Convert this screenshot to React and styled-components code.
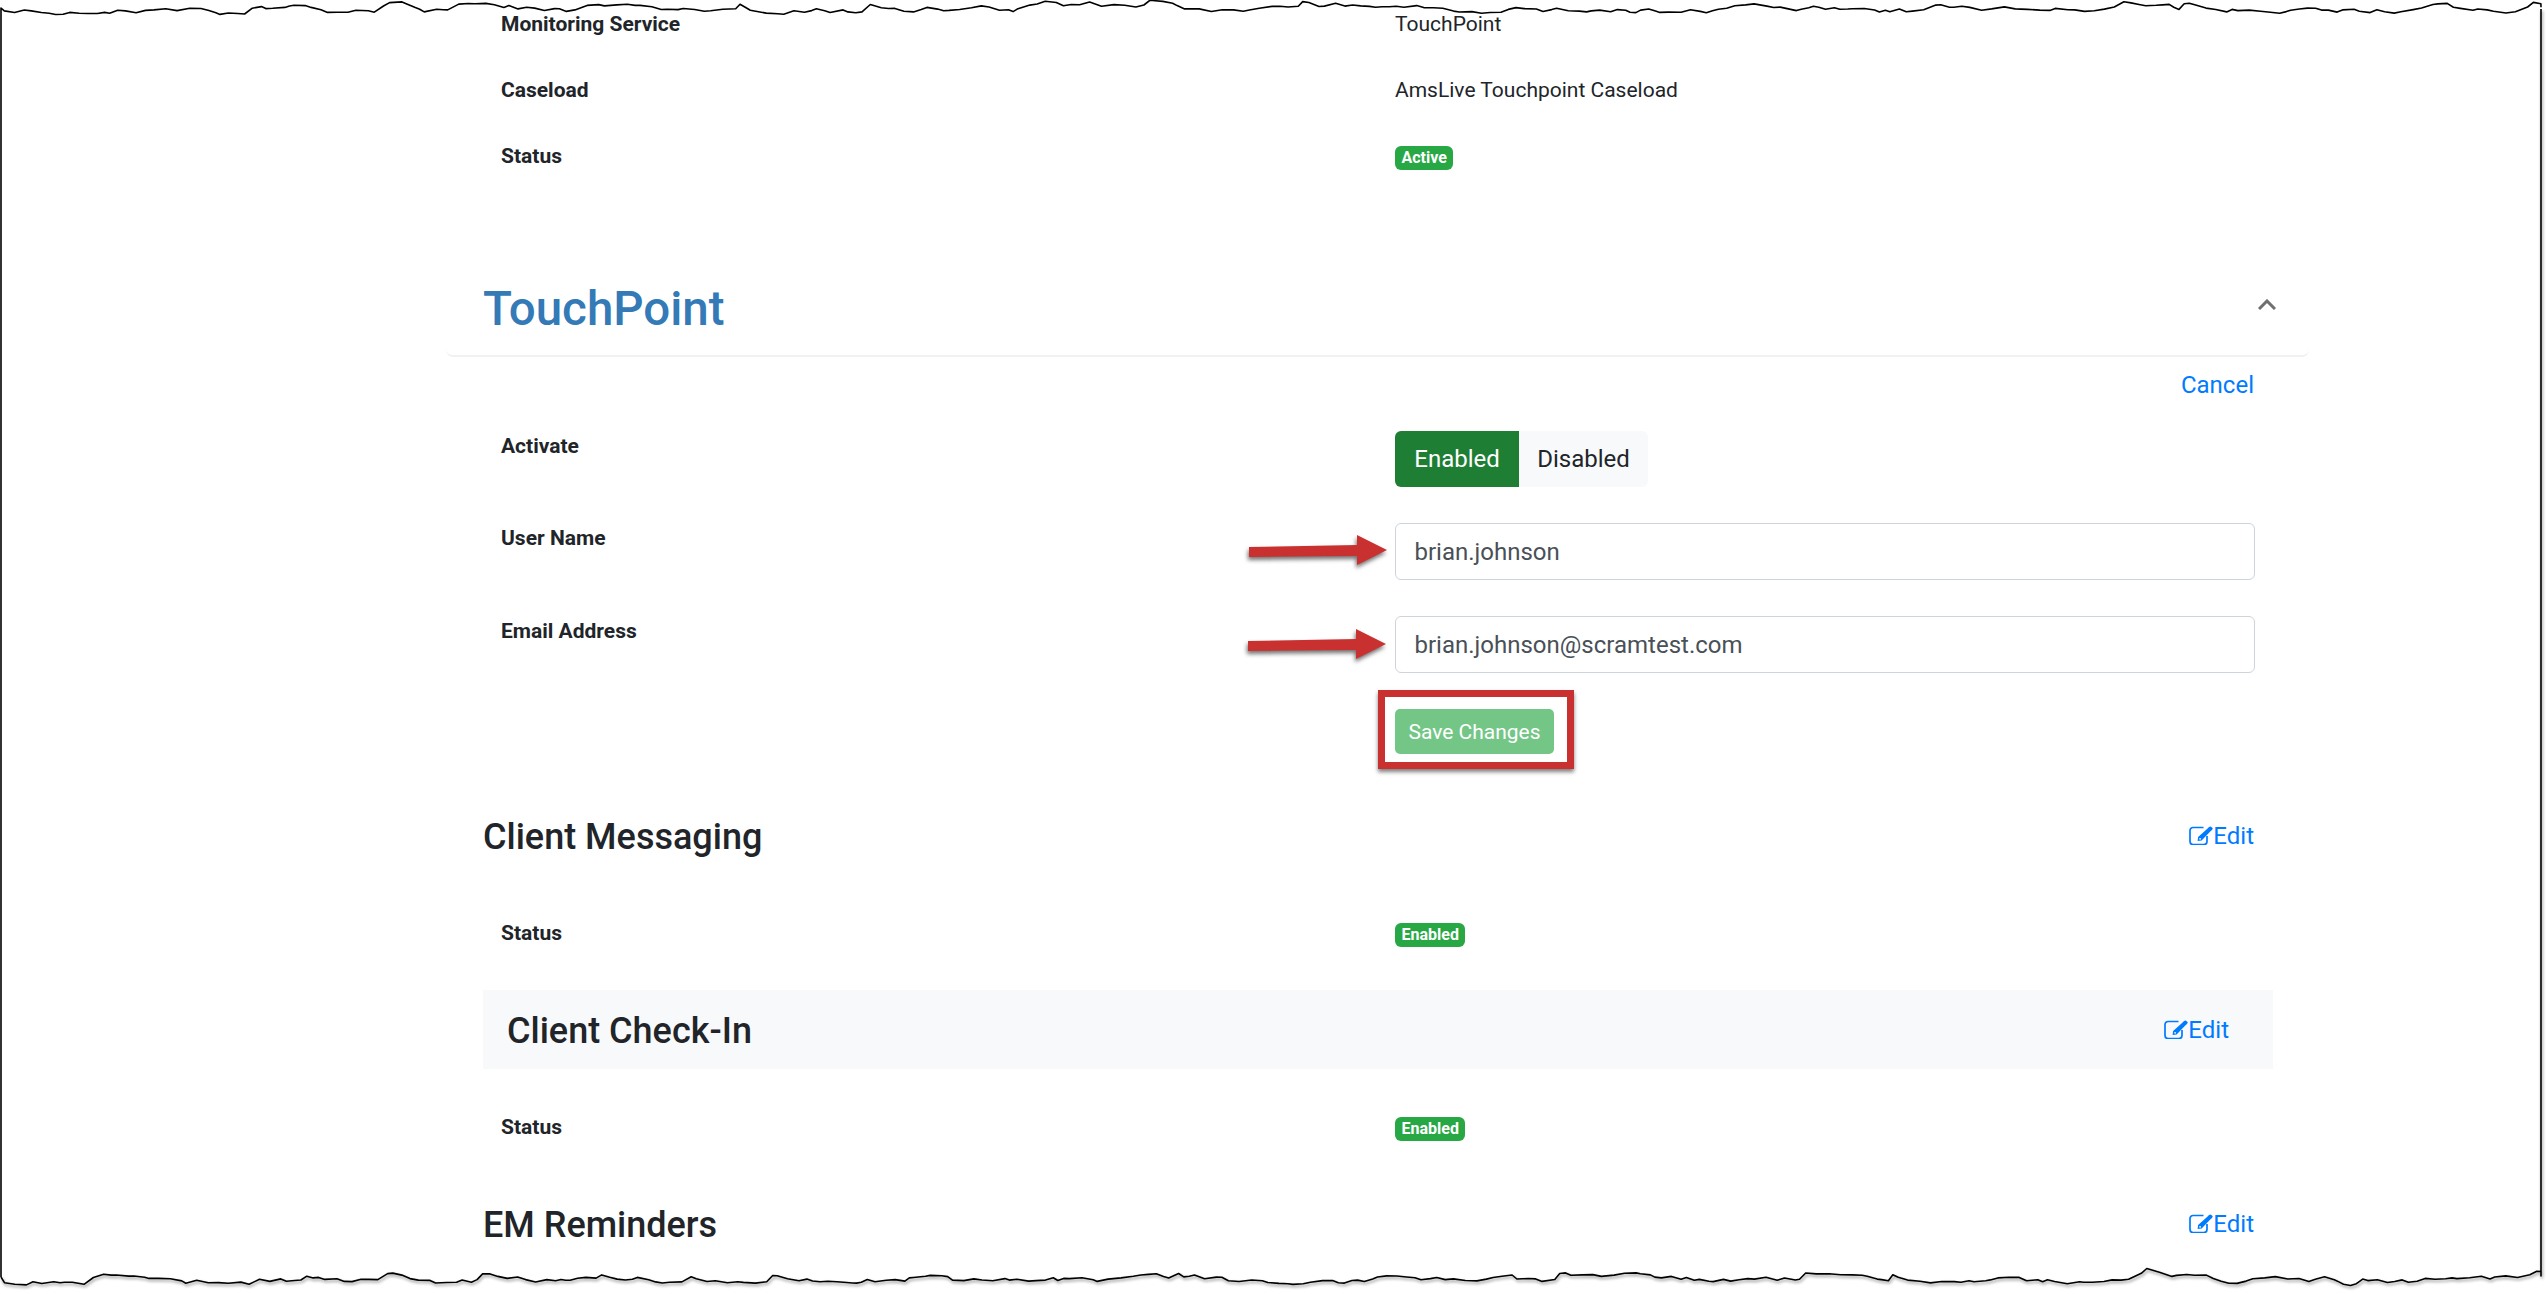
import React from 'react'
import styled, { createGlobalStyle } from 'styled-components'

const GlobalStyle = createGlobalStyle`
  html, body {
    margin: 0;
    padding: 0;
    background: #fff;
  }
  body {
    font-family: 'Roboto', 'Liberation Sans', sans-serif;
    color: #212529;
  }
`

const Sheet = styled.div`
  position: relative;
  width: 2547px;
  height: 1294px;
  overflow: hidden;
  background: #fff;
  padding: 9px 238px 0 450px;
  box-sizing: border-box;
`

const Content = styled.div`
  display: flex;
  flex-direction: column;
  width: 1859px;
`

const Inner = styled.div`
  padding: 0 36px 0 33px;
`

const Row = styled.div`
  display: grid;
  grid-template-columns: 912px 1fr;
  height: ${(p) => p.$height || 66}px;
`

const Label = styled.div`
  padding-left: 18px;
  padding-top: ${(p) => p.$top || 0}px;
  font-size: 21px;
  line-height: 31.5px;
  font-weight: 700;
`

const Value = styled.div`
  font-size: 21px;
  line-height: 31.5px;
  color: #212529;
`

const Badge = styled.span`
  display: inline-flex;
  align-items: center;
  justify-content: center;
  vertical-align: top;
  height: 24px;
  padding: 0 6.5px;
  margin-top: ${(p) => p.$top || 0}px;
  border-radius: 6px;
  background: #28a745;
  color: #fff;
  font-size: 16px;
  line-height: 24px;
  font-weight: 700;
`

const ServiceHeader = styled.div`
  display: flex;
  align-items: flex-end;
  justify-content: space-between;
  height: 150px;
  margin: -2px 0 0 -4px;
  padding: 0 33px 0 37px;
  border-bottom: 2px solid #f0f1f2;
  border-radius: 0 0 7px 7px;
`

const ServiceTitle = styled.h1`
  margin: 0 0 17px;
  font-size: 47.5px;
  line-height: 57px;
  font-weight: 500;
  color: #337ab7;
`

const ChevronMark = styled.svg`
  width: 18px;
  height: 11px;
  margin-bottom: 45px;
  fill: none;
  stroke: #707070;
  stroke-width: 3;
`

const ActionBar = styled.div`
  display: flex;
  justify-content: flex-end;
  height: 74px;
  padding-top: 10px;
  padding-right: 19px;
  box-sizing: border-box;
`

const TextLink = styled.a`
  display: inline-flex;
  align-items: center;
  height: 36px;
  font-size: 24px;
  color: #007bff;
  text-decoration: none;
`

const Toggle = styled.div`
  display: inline-flex;
  height: 56px;
  border-radius: 6px;
  overflow: hidden;
`

const ToggleOption = styled.div`
  display: flex;
  align-items: center;
  justify-content: center;
  width: ${(p) => p.$width}px;
  font-size: 24px;
  background: ${(p) => (p.$active ? '#1e7e34' : '#f8f9fa')};
  color: ${(p) => (p.$active ? '#fff' : '#212529')};
`

const FieldCell = styled.div`
  position: relative;
  padding-right: 18px;
`

const Input = styled.input`
  display: block;
  width: 100%;
  height: 57px;
  box-sizing: border-box;
  padding: 0 18.5px;
  border: 1.5px solid #ced4da;
  border-radius: 6px;
  background: #fff;
  font-family: inherit;
  font-size: 24px;
  color: #495057;
`

const ArrowMark = styled.svg`
  position: absolute;
  top: ${(p) => p.$top}px;
  left: ${(p) => p.$left}px;
  width: 150px;
  height: 44px;
  overflow: visible;
  filter: drop-shadow(-1px 3px 2px rgba(0, 0, 0, 0.55));
`

const SaveWrap = styled.div`
  position: relative;
  display: inline-block;
`

const SaveButton = styled.button`
  display: block;
  width: 159px;
  height: 45px;
  padding: 0;
  border: 0;
  border-radius: 5px;
  background: #74c687;
  color: #fff;
  font-family: inherit;
  font-size: 21px;
`

const Highlight = styled.div`
  position: absolute;
  top: -19px;
  left: -17px;
  right: -20px;
  bottom: -15px;
  border: 7px solid #c93131;
  box-shadow: 0 3px 4px rgba(0, 0, 0, 0.5);
`

const SectionHeader = styled.div`
  display: flex;
  align-items: center;
  justify-content: space-between;
  height: 79px;
  padding: 0 ${(p) => (p.$shaded ? 44 : 19)}px 0 ${(p) => (p.$shaded ? 24 : 0)}px;
  background: ${(p) => (p.$shaded ? '#f8f9fa' : 'transparent')};
`

const SectionTitle = styled.h2`
  margin: 0;
  padding-top: 4px;
  font-size: 36px;
  line-height: 43px;
  font-weight: 500;
  color: #212529;
`

const EditGlyph = styled.svg`
  width: 24px;
  height: 19px;
  flex: none;
  fill: currentColor;
`

const Frame = styled.svg`
  position: absolute;
  top: 0;
  left: 0;
  width: 2547px;
  height: 1294px;
  pointer-events: none;
`

const FrameLine = styled.path`
  fill: none;
  stroke: #000;
  stroke-width: 1.6;
  stroke-linejoin: round;
  filter: ${(p) => (p.$shadow ? 'drop-shadow(1.5px 2px 1.5px rgba(0,0,0,0.45))' : 'none')};
`

// torn paper edge, seeded so it comes out the same each run
function tornEdge(seed, base, spread) {
  let s = seed
  const rnd = () => {
    s = (s * 16807) % 2147483647
    return s / 2147483647
  }
  const pts = []
  let x = 0
  let y = base
  while (x < 2541) {
    x += 4 + rnd() * 9
    const pull = (base - y) * 0.25
    y += pull + (rnd() - 0.5) * spread
    if (rnd() < 0.08) y -= spread * 0.9
    pts.push(`${Math.min(x, 2541).toFixed(1)} ${y.toFixed(1)}`)
  }
  return pts
}

const topEdge = tornEdge(4711, 10, 5)
const bottomEdge = tornEdge(9137, 1281, 5)
const topPath = `M1 1277 L1 8 L${topEdge.join(' L')}`
const bottomPath = `M2541 9 L2541 1276 L${[...bottomEdge].reverse().join(' L')} L1 1277`

function Arrow({ top, left }) {
  return (
    <ArrowMark $top={top} $left={left} viewBox="0 0 150 44">
      <polygon points="0,12 108,10 108,0 138,15 108,30 108,21 0,22" fill="#c93131" />
    </ArrowMark>
  )
}

function EditIcon() {
  return (
    <EditGlyph viewBox="0 0 24 19">
      <path d="M14.5 1.5H4A3 3 0 0 0 1 4.5V15.5A3 3 0 0 0 4 18.5H15A3 3 0 0 0 18 15.5V10" fill="none" stroke="currentColor" strokeWidth="1.7" />
      <path
        fillRule="evenodd"
        d="M8.6 15L9.1 11L18.6 2.4L20 1L21.8 0.4L23.8 2.2L23 4L21.5 5.2L12.6 14.4ZM10.2 12.8a0.9 0.9 0 1 0 1.8 0a0.9 0.9 0 1 0-1.8 0Z"
      />
    </EditGlyph>
  )
}

function EditLink() {
  return (
    <TextLink href="#">
      <EditIcon />
      Edit
    </TextLink>
  )
}

export default function App() {
  return (
    <>
      <GlobalStyle />
      <Sheet>
        <Content>
          <Inner>
            <Row>
              <Label>Monitoring Service</Label>
              <Value>TouchPoint</Value>
            </Row>
            <Row>
              <Label>Caseload</Label>
              <Value>AmsLive Touchpoint Caseload</Value>
            </Row>
            <Row>
              <Label>Status</Label>
              <Value>
                <Badge $top={5}>Active</Badge>
              </Value>
            </Row>
          </Inner>
          <ServiceHeader>
            <ServiceTitle>TouchPoint</ServiceTitle>
            <ChevronMark viewBox="0 0 18 11">
              <polyline points="1,10 9,2 17,10" />
            </ChevronMark>
          </ServiceHeader>
          <Inner>
            <ActionBar>
              <TextLink href="#">Cancel</TextLink>
            </ActionBar>
            <Row $height={92}>
              <Label>Activate</Label>
              <div>
                <Toggle>
                  <ToggleOption $active $width={124}>Enabled</ToggleOption>
                  <ToggleOption $width={129}>Disabled</ToggleOption>
                </Toggle>
              </div>
            </Row>
            <Row $height={93}>
              <Label>User Name</Label>
              <FieldCell>
                <Arrow top={12} left={-146} />
                <Input readOnly value="brian.johnson" />
              </FieldCell>
            </Row>
            <Row $height={93}>
              <Label>Email Address</Label>
              <FieldCell>
                <Arrow top={13} left={-147} />
                <Input readOnly value="brian.johnson@scramtest.com" />
              </FieldCell>
            </Row>
            <Row $height={87}>
              <div />
              <div>
                <SaveWrap>
                  <SaveButton>Save Changes</SaveButton>
                  <Highlight />
                </SaveWrap>
              </div>
            </Row>
            <SectionHeader>
              <SectionTitle>Client Messaging</SectionTitle>
              <EditLink />
            </SectionHeader>
            <Row $height={115}>
              <Label $top={43}>Status</Label>
              <div>
                <Badge $top={48}>Enabled</Badge>
              </div>
            </Row>
            <SectionHeader $shaded>
              <SectionTitle>Client Check-In</SectionTitle>
              <EditLink />
            </SectionHeader>
            <Row $height={115}>
              <Label $top={43}>Status</Label>
              <div>
                <Badge $top={48}>Enabled</Badge>
              </div>
            </Row>
            <SectionHeader>
              <SectionTitle>EM Reminders</SectionTitle>
              <EditLink />
            </SectionHeader>
          </Inner>
        </Content>
        <Frame viewBox="0 0 2547 1294">
          <FrameLine d={topPath} />
          <FrameLine $shadow d={bottomPath} />
        </Frame>
      </Sheet>
    </>
  )
}
